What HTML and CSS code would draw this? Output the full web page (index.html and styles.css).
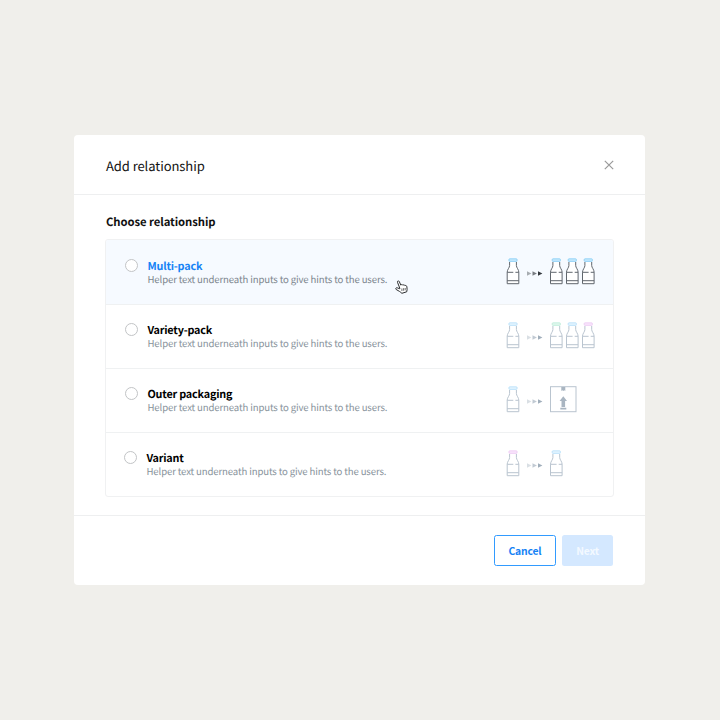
FILE: index.html
```
<!DOCTYPE html>
<html lang="en">
<head>
<meta charset="utf-8">
<title>Add relationship</title>
<link rel="stylesheet" href="styles.css">
</head>
<body>
<svg class="defs" aria-hidden="true">
  <symbol id="bottle" viewBox="0 0 14 28" overflow="visible">
    <path class="glass" d="M3.6 4v3.6C3.6 9.6 1.2 11.600 1.200 14.200V25.700H12.800V14.200C12.800 11.600 10.400 9.600 10.400 7.600V4M1.200 14.300H7.300M9.400 14.300H12.800M1.200 22.700H12.800"/>
    <rect class="cap" x="2.900" y="0.800" width="8.200" height="2.600" rx="0.800"/>
  </symbol>
  <symbol id="arrows" viewBox="0 0 16 5" overflow="visible">
    <path opacity=".4" d="M0 .2 4.400 2.500 0 4.800z"/>
    <path opacity=".65" d="M5.500 .2 9.900 2.500 5.500 4.800z"/>
    <path d="M11 .2 15.400 2.500 11 4.800z"/>
  </symbol>
</svg>
<main class="modal">
  <header class="head">
    <h1 class="title">Add relationship</h1>
    <svg class="close" viewBox="0 0 10 10"><path d="M.8 .8 9.200 9.200M9.200 .8 .8 9.200"/></svg>
  </header>
  <section class="content">
    <h2 class="subtitle">Choose relationship</h2>
    <div class="list">
      <div class="row active">
        <span class="radio"></span>
        <div class="copy"><div class="name">Multi-pack</div><div class="hint">Helper text underneath inputs to give hints to the users.</div></div>
        <svg class="art" viewBox="0 0 90 28">
          <use class="blue" href="#bottle" x="0" width="14" height="28"/>
          <use class="arrows" href="#arrows" x="21" y="13" width="16" height="5"/>
          <use class="blue" href="#bottle" x="43.300" width="14" height="28"/>
          <use class="blue" href="#bottle" x="59.300" width="14" height="28"/>
          <use class="blue" href="#bottle" x="75.300" width="14" height="28"/>
        </svg>
        <svg class="cursor" viewBox="0 0 13 14"><path d="M4.800 8.200 2.500 2.300C2 .8 3.700 .3 4.300 1.600L5.800 5.100C6.500 4.300 7.500 4.400 7.900 5.200 8.700 4.500 9.600 4.800 9.900 5.600 11 5.100 11.700 5.800 11.900 7 12.300 9 12.100 10.300 11.700 11.800L6.900 13.300C5.500 12 3.800 10.900 1.300 9.600 .1 8.800 .9 7.500 2.200 7.800L4.800 8.800z"/><path class="creases" d="M6.900 8.500V11M8.600 8.200V10.700M10.200 8V10.300"/></svg>
      </div>
      <div class="row">
        <span class="radio"></span>
        <div class="copy"><div class="name">Variety-pack</div><div class="hint">Helper text underneath inputs to give hints to the users.</div></div>
        <svg class="art" viewBox="0 0 90 28">
          <use class="blue" href="#bottle" x="0" width="14" height="28"/>
          <use class="arrows" href="#arrows" x="21" y="13" width="16" height="5"/>
          <use class="green" href="#bottle" x="43.300" width="14" height="28"/>
          <use class="blue" href="#bottle" x="59.300" width="14" height="28"/>
          <use class="pink" href="#bottle" x="75.300" width="14" height="28"/>
        </svg>
      </div>
      <div class="row">
        <span class="radio"></span>
        <div class="copy"><div class="name">Outer packaging</div><div class="hint">Helper text underneath inputs to give hints to the users.</div></div>
        <svg class="art" viewBox="0 0 90 28">
          <use class="blue" href="#bottle" x="0" width="14" height="28"/>
          <use class="arrows" href="#arrows" x="21" y="13" width="16" height="5"/>
          <rect class="box" x="44.500" y="0.700" width="25.500" height="25"/>
          <path class="mark" d="M55.300 1h4v4l-1-.7-1 .7-1-.7-1 .7zM57.300 10.300l3.700 4.700h-1.900v6h-3.600v-6h-1.900zM54.300 21.800h6v1.800h-6z"/>
        </svg>
      </div>
      <div class="row shifted">
        <span class="radio"></span>
        <div class="copy"><div class="name">Variant</div><div class="hint">Helper text underneath inputs to give hints to the users.</div></div>
        <svg class="art" viewBox="0 0 90 28">
          <use class="pink" href="#bottle" x="0" width="14" height="28"/>
          <use class="arrows" href="#arrows" x="21" y="13" width="16" height="5"/>
          <use class="blue" href="#bottle" x="43.300" width="14" height="28"/>
        </svg>
      </div>
    </div>
  </section>
  <footer class="foot">
    <button class="btn cancel">Cancel</button>
    <button class="btn next">Next</button>
  </footer>
</main>
</body>
</html>
```
FILE: styles.css
```
* { box-sizing: border-box; }
body {
  margin: 0;
  height: 720px;
  padding: 135px 0 0 74px;
  background: #f0efeb;
  font-family: "Noto Sans CJK SC", "Liberation Sans", sans-serif;
  text-rendering: geometricPrecision;
  color: #111;
}
.defs { position: absolute; width: 0; height: 0; }
.modal {
  width: 571.400px;
  height: 450px;
  background: #fff;
  border-radius: 4px;
  display: flex;
  flex-direction: column;
}
.head {
  height: 60px;
  border-bottom: 1px solid #eeeff0;
  padding: 0 31.400px 0 32px;
  display: flex;
  align-items: center;
  justify-content: space-between;
}
.title { margin: 3px 0 0; font-size: 13px; line-height: 20px; font-weight: 400; letter-spacing: -.07px; }
.close { width: 10px; height: 10px; fill: none; stroke: #999; stroke-width: 1.200; }
.content { padding: 16px 31.400px 0 32px; height: 320px; }
.subtitle { margin: 0; font-size: 11.300px; line-height: 22px; font-weight: 700; height: 28px; letter-spacing: -.07px; }
.list { margin-left: -1px; border: 1px solid #f0f1f2; border-radius: 3px; height: 258px; overflow: hidden; }
.row {
  position: relative;
  height: 64px;
  padding: 18px 17px 0 19px;
  display: flex;
  align-items: flex-start;
}
.row + .row { box-shadow: inset 0 1px #eff1f2; }
.active { background: #f6faff; }
.shifted { padding-left: 18px; }
.radio { width: 13px; height: 13px; margin-top: 1px; border: 1px solid #c2c4c6; border-radius: 50%; background: #fff; }
.copy { margin: 0 0 0 9.500px; flex: 1; }
.name { font-size: 10.800px; line-height: 16px; font-weight: 700; color: #000; letter-spacing: -.2px; }
.hint { margin-top: -2px; font-size: 9.600px; line-height: 14px; color: #87929b; letter-spacing: -.13px; }
.active .name { color: #1683f5; }
.active .hint { color: #7c858d; }
.art {
  width: 90px;
  height: 28px;
  --glass: #b9c4cf;
  --arrow: #a0aebb;
}
.active .art { --glass: #60666d; --arrow: #33383d; }
.glass { fill: #fff; stroke: var(--glass); stroke-width: 1; }
.cap { fill: var(--cap-fill); stroke: var(--cap); stroke-width: .8; }
.blue { --cap: #b5def9; --cap-fill: #e2f4ff; }
.active .blue { --cap: #85cdf5; --cap-fill: #c5e9fd; }
.green { --cap: #bdecd9; --cap-fill: #def8ed; }
.pink { --cap: #eccaf2; --cap-fill: #f9e4fc; }
.arrows { fill: var(--arrow); }
.box { fill: #fff; stroke: #b9c4cf; }
.mark { fill: #a9b5c1; }
.cursor {
  position: absolute;
  left: 289px;
  top: 40px;
  width: 13px;
  height: 14px;
  fill: #fff;
  stroke: #2c2e30;
  stroke-width: 1;
}
.creases { stroke-width: .7; }
.foot {
  height: 70px;
  border-top: 1px solid #eeeff0;
  padding: 19px 32px 0 0;
  display: flex;
  justify-content: flex-end;
  gap: 6px;
}
.btn {
  height: 31px;
  padding: 0;
  border-radius: 2.500px;
  font: 700 10.400px/20px "Noto Sans CJK SC", "Liberation Sans", sans-serif;
  letter-spacing: -.2px;
}
.cancel { width: 62px; border: 1px solid #329bff; background: #fff; color: #1683f5; }
.next { width: 51.500px; border: 0; background: #d4e8ff; color: #f3f9ff; }
```
